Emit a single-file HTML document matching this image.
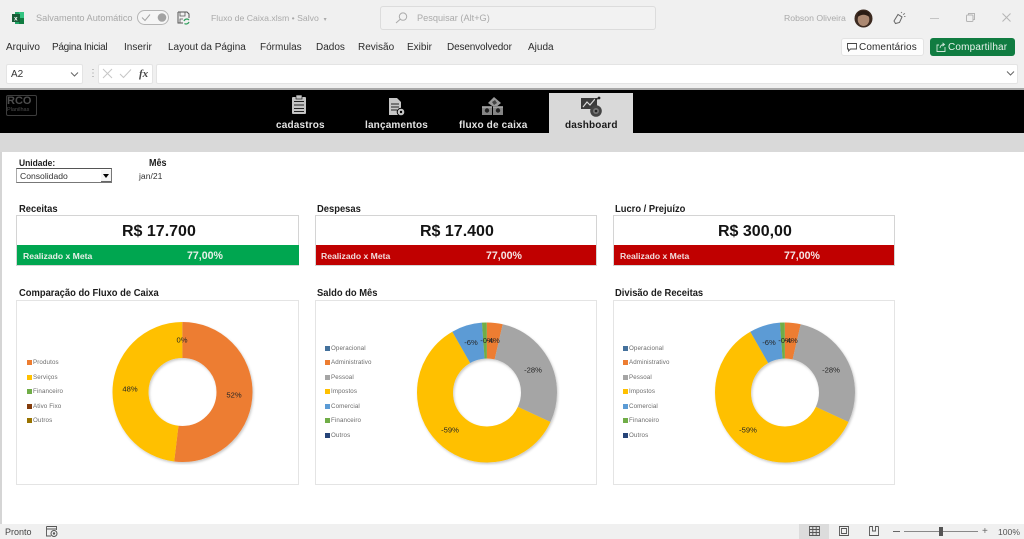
<!DOCTYPE html>
<html lang="pt-BR"><head><meta charset="utf-8"><title>Fluxo de Caixa</title>
<style>
html,body{margin:0;padding:0;width:1024px;height:539px;overflow:hidden;background:#fff}
body{position:relative;font-family:"Liberation Sans",sans-serif;color:#222;filter:blur(.35px)}
.a{position:absolute}
.t{position:absolute;white-space:nowrap;line-height:12px}
.m{font-size:10px;top:42px;color:#2c2c2c}
.h{font-size:10.4px;font-weight:bold;color:#1c1c1c;transform:scaleX(.903);transform-origin:0 0}
.box{position:absolute;background:#fff;border:1px solid #d4d4d4;box-sizing:border-box}
.val{position:absolute;font-size:16px;font-weight:bold;color:#141414;line-height:20px;white-space:nowrap}
.bar{position:absolute;height:20px;top:245px;width:282px}
.bar b{position:absolute;top:1px;line-height:20px;color:#e9f0e9;white-space:nowrap}
.bar b.l{font-size:8.6px}
.bar b.r{font-size:10.6px}
.lg{position:absolute;font-size:6.2px;color:#6c6c6c;line-height:8px;white-space:nowrap;letter-spacing:.12px}
.lg i{display:inline-block;width:5px;height:5px;margin-right:1px;vertical-align:-.5px}
.nav{position:absolute;top:120px;font-size:10px;font-weight:bold;color:#e4e4e4;line-height:12px;white-space:nowrap;letter-spacing:.17px}
svg{position:absolute;overflow:visible}
svg text{font-family:"Liberation Sans",sans-serif}
</style></head><body>

<!-- Excel chrome -->
<div class="a" style="left:0;top:0;width:1024px;height:90px;background:#f0f0f0"></div>
<div class="a" style="left:0;top:88px;width:1024px;height:2px;background:#a8a8a8"></div>

<svg style="left:12px;top:11px" width="13" height="14" viewBox="0 0 13 14">
<rect x="3" y="1" width="9" height="12" fill="#21a366"/><rect x="7" y="1" width="5" height="6" fill="#33c481"/><rect x="7" y="7" width="5" height="6" fill="#107c41"/>
<rect x="0" y="3" width="8" height="8" fill="#185c37"/><text x="2" y="9.6" font-size="6.5" font-weight="bold" fill="#fff">x</text></svg>
<div class="t" style="left:36px;top:12px;font-size:9.2px;color:#a8a8a8">Salvamento Automático</div>
<div class="a" style="left:137px;top:10px;width:32px;height:15px;border:1px solid #b5b5b5;border-radius:8px;box-sizing:border-box;background:#f5f5f5"></div>
<svg style="left:142px;top:13px" width="24" height="9" viewBox="0 0 24 9"><path d="M0 4.5 L3 7.5 L8 1.5" fill="none" stroke="#a5a5a5" stroke-width="1"/><circle cx="20" cy="4.5" r="4.3" fill="#a2a2a2"/></svg>
<svg style="left:177px;top:11px" width="13" height="14" viewBox="0 0 13 14">
<path d="M1 1 H10 L12 3 V7 M1 1 V12 H6" fill="none" stroke="#555" stroke-width="1"/><path d="M3 1 V5 H8 V1 M3 12 V8 H6" fill="none" stroke="#555" stroke-width=".8"/>
<path d="M7 10 A3 3 0 0 1 12 9 M12 11 A3 3 0 0 1 7.5 12.5" fill="none" stroke="#2f9e5c" stroke-width="1.2"/></svg>
<div class="t" style="left:211px;top:12px;font-size:8.7px;color:#aaa">Fluxo de Caixa.xlsm • Salvo &nbsp;<span style="font-size:6px">▾</span></div>
<div class="a" style="left:380px;top:6px;width:276px;height:24px;border:1px solid #dcdcdc;border-radius:3px;box-sizing:border-box;background:#f2f2f2"></div>
<svg style="left:395px;top:12px" width="13" height="12" viewBox="0 0 13 12"><circle cx="8" cy="4.6" r="3.7" fill="none" stroke="#aaa"/><path d="M5.2 7.2 L1 11" stroke="#aaa" fill="none"/></svg>
<div class="t" style="left:417px;top:12px;font-size:9.2px;color:#aaa">Pesquisar (Alt+G)</div>

<div class="t" style="left:784px;top:12px;font-size:8.7px;color:#aaa">Robson Oliveira</div>
<svg style="left:854px;top:9px" width="19" height="19" viewBox="0 0 19 19"><circle cx="9.5" cy="9.5" r="9" fill="#3c2a20"/><ellipse cx="9.5" cy="10.500" rx="5.800" ry="6.500" fill="#ab8871"/><path d="M3.500 8 Q9.500 3.500 15.500 8 L15 3.500 Q9 0 4 3.500Z" fill="#2a1c14"/></svg>
<svg style="left:892px;top:11px" width="14" height="14" viewBox="0 0 14 14"><path d="M2 10 L6 3.5 L10 6 L7.5 11.5 L3.5 12.5Z" fill="none" stroke="#666" stroke-width="1"/><path d="M9 2 L10 1 M11 3.5 L13 2.5 M12 5.5 L13.5 5.5" stroke="#666" stroke-width=".8"/></svg>
<div class="a" style="left:930px;top:18px;width:9px;height:1px;background:#c4c4c4"></div>
<svg style="left:966px;top:13px" width="9" height="9" viewBox="0 0 9 9"><rect x=".5" y="2" width="6.5" height="6.5" rx="1" fill="none" stroke="#b5b5b5"/><path d="M2.5 2 V.5 H8.5 V6.5 H7" fill="none" stroke="#b5b5b5"/></svg>
<svg style="left:1002px;top:13px" width="9" height="9" viewBox="0 0 9 9"><path d="M.5 .5 L8.5 8.5 M8.5 .5 L.5 8.5" stroke="#b5b5b5" stroke-width="1"/></svg>

<div class="t m" style="left:6px">Arquivo</div>
<div class="t m" style="left:52px;letter-spacing:-.3px">Página Inicial</div>
<div class="t m" style="left:124px">Inserir</div>
<div class="t m" style="left:168px">Layout da Página</div>
<div class="t m" style="left:260px">Fórmulas</div>
<div class="t m" style="left:316px">Dados</div>
<div class="t m" style="left:358px">Revisão</div>
<div class="t m" style="left:407px">Exibir</div>
<div class="t m" style="left:447px;letter-spacing:-.15px">Desenvolvedor</div>
<div class="t m" style="left:528px">Ajuda</div>

<div class="a" style="left:841px;top:38px;width:83px;height:18px;background:#fdfdfd;border:1px solid #e3e3e3;border-radius:3px;box-sizing:border-box"></div>
<svg style="left:847px;top:43px" width="10" height="9" viewBox="0 0 10 9"><path d="M.5 .5 H9.5 V6 H3.5 L1.5 8 V6 H.5Z" fill="none" stroke="#444" stroke-width=".9"/></svg>
<div class="t" style="left:859px;top:42px;font-size:10px;color:#2c2c2c;letter-spacing:.1px">Comentários</div>
<div class="a" style="left:930px;top:38px;width:85px;height:18px;background:#107c41;border-radius:3px"></div>
<svg style="left:936px;top:42px" width="10" height="10" viewBox="0 0 10 10"><path d="M3 3 H1 V9.5 H9 V5 M4 6 Q4.5 2.5 8 2.5 M6.5 .8 L8.5 2.5 L6.5 4.2" fill="none" stroke="#cfe6d8" stroke-width=".9"/></svg>
<div class="t" style="left:948px;top:42px;font-size:10px;color:#e8f3ec;letter-spacing:.17px">Compartilhar</div>

<div class="a" style="left:6px;top:64px;width:77px;height:20px;background:#fff;border:1px solid #e4e4e4;border-radius:2px;box-sizing:border-box"></div>
<div class="t" style="left:11px;top:69px;font-size:10px;color:#333">A2</div>
<svg style="left:70px;top:72px" width="9" height="5" viewBox="0 0 9 5"><path d="M1 .5 L4.5 4 L8 .5" fill="none" stroke="#666" stroke-width="1"/></svg>
<div class="t" style="left:88px;top:68px;font-size:10px;color:#999">⋮</div>
<div class="a" style="left:98px;top:64px;width:55px;height:20px;background:#fff;border:1px solid #e4e4e4;border-radius:2px;box-sizing:border-box"></div>
<svg style="left:102px;top:68px" width="30" height="11" viewBox="0 0 30 11"><path d="M1 1 L10 10 M10 1 L1 10" stroke="#c6c6c6" stroke-width="1"/><path d="M18 6 L21.5 9.5 L29 1.5" fill="none" stroke="#c6c6c6" stroke-width="1"/></svg>
<div class="t" style="left:139px;top:68px;font-family:'Liberation Serif',serif;font-style:italic;font-weight:bold;font-size:11px;color:#444">fx</div>
<div class="a" style="left:156px;top:64px;width:862px;height:20px;background:#fff;border:1px solid #e4e4e4;border-radius:2px;box-sizing:border-box"></div>
<svg style="left:1006px;top:71px" width="9" height="5" viewBox="0 0 9 5"><path d="M1 .5 L4.5 4 L8 .5" fill="none" stroke="#666" stroke-width="1"/></svg>

<!-- Sheet header -->
<div class="a" style="left:0;top:90px;width:1024px;height:43px;background:#000"></div>
<div class="a" style="left:0;top:133px;width:1024px;height:19px;background:#d9d9d9"></div>
<div class="a" style="left:549px;top:93px;width:84px;height:40px;background:#d9d9d9"></div>
<div class="a" style="left:0;top:152px;width:2px;height:372px;background:#d5d5d5"></div>

<div class="a" style="left:6px;top:95px;width:31px;height:21px;border:1px solid #3d3d3d;border-radius:2px;box-sizing:border-box"></div>
<div class="t" style="left:7px;top:96px;font-size:11px;line-height:11px;color:#4d4d4d;font-weight:bold">RCO</div>
<div class="t" style="left:7px;top:107px;font-size:5.5px;line-height:7px;color:#4d4d4d">Planilhas</div>

<svg style="left:291px;top:95px" width="16" height="20" viewBox="0 0 16 20">
<rect x="1" y="2" width="14" height="17" rx="1" fill="#c4c4c4"/><rect x="5" y="0" width="6" height="4" fill="#c4c4c4" stroke="#000" stroke-width=".6"/>
<path d="M3 6.5 H13 M3 10 H13 M3 13.5 H13 M3 16.5 H13" stroke="#222" stroke-width="1.1"/></svg>
<svg style="left:388px;top:97px" width="18" height="21" viewBox="0 0 18 21">
<path d="M1 1 H9 L13 5 V18 H1Z" fill="#c6c6c6"/><path d="M3 7 H11 M3 10 H11 M3 13 H9" stroke="#222" stroke-width="1.1"/>
<circle cx="13" cy="15" r="4.3" fill="#000"/><circle cx="13" cy="15" r="3.3" fill="#c6c6c6"/><circle cx="13" cy="15" r="1.2" fill="#000"/></svg>
<svg style="left:482px;top:97px" width="22" height="20" viewBox="0 0 22 20">
<path d="M6 6 L12 0 L19 6 L13 11Z" fill="#9a9a9a"/><path d="M10 5 L13 3 L15 6 L12 8Z" fill="#444"/>
<rect x="0" y="9" width="10" height="9" fill="#858585"/><rect x="11" y="9" width="10" height="9" fill="#858585"/>
<circle cx="5" cy="13.500" r="2.200" fill="#222"/><circle cx="16" cy="13.500" r="2.200" fill="#222"/><path d="M0 10.500 H10 M11 10.500 H21" stroke="#bbb" stroke-width=".6"/></svg>
<svg style="left:581px;top:96px" width="22" height="22" viewBox="0 0 22 22">
<rect x="0" y="2" width="16" height="11" fill="#3b3b3b"/><path d="M2 11 L6 6 L9 9 L14 3" stroke="#d9d9d9" stroke-width="1.2" fill="none"/><circle cx="18" cy="2" r="1.4" fill="#222"/><path d="M14 4 L18 2" stroke="#222"/>
<circle cx="15" cy="15" r="5.8" fill="#444"/><circle cx="15" cy="15" r="3" fill="#777"/><circle cx="15" cy="15" r="1.3" fill="#222"/></svg>

<div class="nav" style="left:276px">cadastros</div>
<div class="nav" style="left:365px">lançamentos</div>
<div class="nav" style="left:459px">fluxo de caixa</div>
<div class="nav" style="left:565px;color:#1a1a1a">dashboard</div>

<!-- Filters -->
<div class="t h" style="left:19px;top:157px;font-size:9.4px">Unidade:</div>
<div class="t h" style="left:149px;top:158px;font-size:10px">Mês</div>
<div class="a" style="left:16px;top:168px;width:96px;height:15px;border:1px solid #777;border-left-color:#aaa;border-top-color:#555;box-sizing:border-box;background:#fff"></div>
<div class="t" style="left:20px;top:170px;font-size:8.6px;color:#333">Consolidado</div>
<div class="a" style="left:101px;top:170px;width:10px;height:12px;background:#f4f4f4;border-bottom:1px solid #666;box-sizing:border-box"></div>
<svg style="left:103px;top:174px" width="6" height="4" viewBox="0 0 6 4"><path d="M0 0 H6 L3 4Z" fill="#000"/></svg>
<div class="t" style="left:139px;top:170px;font-size:8.6px;color:#333">jan/21</div>

<!-- KPI titles -->
<div class="t h" style="left:19px;top:204px">Receitas</div>
<div class="t h" style="left:317px;top:204px">Despesas</div>
<div class="t h" style="left:615px;top:204px">Lucro / Prejuízo</div>

<!-- KPI cards -->
<div class="box" style="left:16px;top:215px;width:283px;height:51px"></div>
<div class="box" style="left:315px;top:215px;width:282px;height:51px"></div>
<div class="box" style="left:613px;top:215px;width:282px;height:51px"></div>
<div class="val" style="left:122px;top:222px">R$ 17.700</div>
<div class="val" style="left:420px;top:222px">R$ 17.400</div>
<div class="val" style="left:718px;top:222px">R$ 300,00</div>
<div class="bar" style="left:17px;background:#00a650"><b class="l" style="left:6px">Realizado x Meta</b><b class="r" style="left:170px">77,00%</b></div>
<div class="bar" style="left:316px;width:280px;background:#c00000"><b class="l" style="left:5px;color:#f2dcdc">Realizado x Meta</b><b class="r" style="left:170px;color:#f5e4e4">77,00%</b></div>
<div class="bar" style="left:614px;width:280px;background:#c00000"><b class="l" style="left:6px;color:#f2dcdc">Realizado x Meta</b><b class="r" style="left:170px;color:#f5e4e4">77,00%</b></div>

<!-- Chart titles -->
<div class="t h" style="left:19px;top:288px">Comparação do Fluxo de Caixa</div>
<div class="t h" style="left:317px;top:288px">Saldo do Mês</div>
<div class="t h" style="left:615px;top:288px">Divisão de Receitas</div>

<!-- Chart boxes -->
<div class="box" style="left:16px;top:300px;width:283px;height:185px;border-color:#e4e4e4"></div>
<div class="box" style="left:315px;top:300px;width:282px;height:185px;border-color:#e4e4e4"></div>
<div class="box" style="left:613px;top:300px;width:282px;height:185px;border-color:#e4e4e4"></div>

<!-- Donuts -->
<svg style="left:0;top:0" width="1024" height="539" viewBox="0 0 1024 539">
<defs><filter id="s" x="-20%" y="-20%" width="140%" height="140%"><feDropShadow dx="1" dy="1.5" stdDeviation="1.2" flood-color="#000" flood-opacity=".22"/></filter></defs>
<g filter="url(#s)"><g fill="none" stroke-width="36" transform="rotate(-90 182.5 392)">
<circle cx="182.5" cy="392" r="52" pathLength="360" stroke="#ed7d31" stroke-dasharray="187 173"/>
<circle cx="182.5" cy="392" r="52" pathLength="360" stroke="#ffc000" stroke-dasharray="173 187" stroke-dashoffset="-187"/>
</g></g>
<g filter="url(#s)"><g fill="none" stroke-width="36" transform="rotate(-90 487 392.5)">
<circle cx="487" cy="392.5" r="52" pathLength="360" stroke="#ed7d31" stroke-dasharray="13 347"/>
<circle cx="487" cy="392.5" r="52" pathLength="360" stroke="#a5a5a5" stroke-dasharray="102 258" stroke-dashoffset="-13"/>
<circle cx="487" cy="392.5" r="52" pathLength="360" stroke="#ffc000" stroke-dasharray="215.5 144.5" stroke-dashoffset="-115"/>
<circle cx="487" cy="392.5" r="52" pathLength="360" stroke="#5b9bd5" stroke-dasharray="25.5 334.5" stroke-dashoffset="-330.5"/>
<circle cx="487" cy="392.5" r="52" pathLength="360" stroke="#70ad47" stroke-dasharray="4 356" stroke-dashoffset="-356"/>
</g></g>
<g filter="url(#s)"><g fill="none" stroke-width="36" transform="rotate(-90 785 392.5)">
<circle cx="785" cy="392.5" r="52" pathLength="360" stroke="#ed7d31" stroke-dasharray="13 347"/>
<circle cx="785" cy="392.5" r="52" pathLength="360" stroke="#a5a5a5" stroke-dasharray="102 258" stroke-dashoffset="-13"/>
<circle cx="785" cy="392.5" r="52" pathLength="360" stroke="#ffc000" stroke-dasharray="215.5 144.5" stroke-dashoffset="-115"/>
<circle cx="785" cy="392.5" r="52" pathLength="360" stroke="#5b9bd5" stroke-dasharray="25.5 334.5" stroke-dashoffset="-330.5"/>
<circle cx="785" cy="392.5" r="52" pathLength="360" stroke="#70ad47" stroke-dasharray="4 356" stroke-dashoffset="-356"/>
</g></g>
<g font-size="7.6" fill="#262626" text-anchor="middle">
<text x="182" y="342.500">0%</text><text x="130" y="391.500">48%</text><text x="234" y="397.500">52%</text>
<text x="471" y="345">-6%</text><text x="487" y="343">-0%</text><text x="493" y="343">-4%</text><text x="533" y="372.500">-28%</text><text x="450" y="432.500">-59%</text>
<text x="769" y="345">-6%</text><text x="785" y="343">-0%</text><text x="791" y="343">-4%</text><text x="831" y="372.500">-28%</text><text x="748" y="432.500">-59%</text>
</g>
</svg>

<!-- Legends -->
<div class="lg" style="left:27px;top:359px"><i style="background:#ed7d31"></i>Produtos</div>
<div class="lg" style="left:27px;top:374px"><i style="background:#ffc000"></i>Serviços</div>
<div class="lg" style="left:27px;top:388px"><i style="background:#70ad47"></i>Financeiro</div>
<div class="lg" style="left:27px;top:403px"><i style="background:#843c0c"></i>Ativo Fixo</div>
<div class="lg" style="left:27px;top:417px"><i style="background:#997300"></i>Outros</div>

<div class="lg" style="left:325px;top:345px"><i style="background:#44719c"></i>Operacional</div>
<div class="lg" style="left:325px;top:359px"><i style="background:#ed7d31"></i>Administrativo</div>
<div class="lg" style="left:325px;top:374px"><i style="background:#a5a5a5"></i>Pessoal</div>
<div class="lg" style="left:325px;top:388px"><i style="background:#ffc000"></i>Impostos</div>
<div class="lg" style="left:325px;top:403px"><i style="background:#5b9bd5"></i>Comercial</div>
<div class="lg" style="left:325px;top:417px"><i style="background:#70ad47"></i>Financeiro</div>
<div class="lg" style="left:325px;top:432px"><i style="background:#264478"></i>Outros</div>

<div class="lg" style="left:623px;top:345px"><i style="background:#44719c"></i>Operacional</div>
<div class="lg" style="left:623px;top:359px"><i style="background:#ed7d31"></i>Administrativo</div>
<div class="lg" style="left:623px;top:374px"><i style="background:#a5a5a5"></i>Pessoal</div>
<div class="lg" style="left:623px;top:388px"><i style="background:#ffc000"></i>Impostos</div>
<div class="lg" style="left:623px;top:403px"><i style="background:#5b9bd5"></i>Comercial</div>
<div class="lg" style="left:623px;top:417px"><i style="background:#70ad47"></i>Financeiro</div>
<div class="lg" style="left:623px;top:432px"><i style="background:#264478"></i>Outros</div>

<!-- Status bar -->
<div class="a" style="left:0;top:524px;width:1024px;height:15px;background:#f0f0f0"></div>
<div class="t" style="left:5px;top:526px;font-size:9px;color:#444">Pronto</div>
<svg style="left:46px;top:526px" width="12" height="11" viewBox="0 0 12 11"><path d="M.5 .5 H10.5 V4 M.5 .5 V10 H5 M.5 3 H10.5" fill="none" stroke="#555" stroke-width=".9"/><circle cx="8" cy="7.500" r="3" fill="none" stroke="#555"/><circle cx="8" cy="7.500" r="1.200" fill="#555"/></svg>
<div class="a" style="left:799px;top:524px;width:30px;height:15px;background:#dcdcdc"></div>
<svg style="left:809px;top:526px" width="76" height="11" viewBox="0 0 76 11" fill="none" stroke="#555" stroke-width=".9">
<path d="M.5 .5 H10.500 V9.500 H.5Z M.5 3.500 H10.500 M.5 6.500 H10.500 M3.800 .5 V9.500 M7.200 .5 V9.500"/>
<path d="M30.500 .5 H39.500 V9.500 H30.500Z M32.500 2.500 H37.500 V7.500 H32.500Z"/>
<path d="M60.500 .5 V9.500 H69.500 V.5 M60.500 .5 H63.500 V5 H66.500 V.5 H69.500"/></svg>
<div class="a" style="left:893px;top:531px;width:7px;height:1px;background:#666"></div>
<div class="a" style="left:904px;top:531px;width:74px;height:1px;background:#888"></div>
<div class="a" style="left:939px;top:527px;width:4px;height:9px;background:#555"></div>
<div class="t" style="left:982px;top:526px;font-size:10px;color:#666">+</div>
<div class="t" style="left:998px;top:526px;font-size:8.6px;color:#555">100%</div>
</body></html>
